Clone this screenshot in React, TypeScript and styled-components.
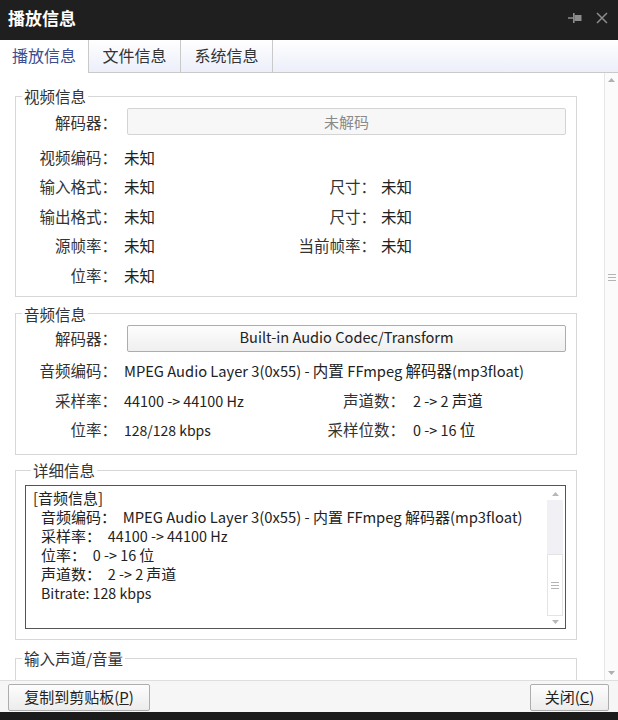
import React from 'react';
import styled, { createGlobalStyle } from 'styled-components';

const Global = createGlobalStyle`
  html, body { margin: 0; padding: 0; background: #fff; }
  body { font-family: "Noto Sans CJK SC", "Noto Sans", sans-serif; color: #222; }
  #root { width: 618px; height: 720px; }
`;

const Window = styled.div`
  width: 618px;
  height: 720px;
  display: flex;
  flex-direction: column;
  background: #fff;
  overflow: hidden;
`;

const TitleBar = styled.div`
  height: 40px;
  flex-shrink: 0;
  background: #1f1f1f;
  display: flex;
  align-items: center;
  padding: 0 10px 0 8px;
  box-sizing: border-box;
  gap: 14px;
`;

const Title = styled.div`
  flex: 1;
  color: #fff;
  font-size: 17px;
  font-weight: bold;
  line-height: 20px;
  margin-top: -4px;
`;

const TitleIcon = styled.svg`
  display: block;
  margin-top: -4px;
`;

const TabStrip = styled.div`
  height: 33px;
  flex-shrink: 0;
  display: flex;
  box-sizing: border-box;
  border-bottom: 1px solid #c9c9c9;
  background: linear-gradient(#ffffff, #eceefa);
`;

const Tab = styled.div<{ $w: number; $active?: boolean }>`
  width: ${p => p.$w}px;
  box-sizing: border-box;
  border-right: 1px solid #c9c9c9;
  display: flex;
  align-items: center;
  justify-content: center;
  font-size: 16px;
  color: ${p => (p.$active ? '#3d4c8e' : '#333')};
  background: ${p => (p.$active ? '#fff' : 'transparent')};
  margin-bottom: ${p => (p.$active ? '-1px' : '0')};
  padding-bottom: ${p => (p.$active ? '3px' : '2px')};
`;

const Main = styled.div`
  flex: 1;
  min-height: 0;
  display: flex;
`;

const ScrollBody = styled.div`
  flex: 1;
  overflow: hidden;
  padding-top: 13px;
  box-sizing: border-box;
`;

const VScroll = styled.div`
  width: 13px;
  flex-shrink: 0;
  border-left: 1px solid #e6e6e6;
  background: #fbfbfb;
  display: flex;
  flex-direction: column;
  align-items: center;
`;

const ArrowBtn = styled.div<{ $h: number }>`
  height: ${p => p.$h}px;
  width: 100%;
  display: flex;
  align-items: center;
  justify-content: center;
  flex-shrink: 0;
`;

const Thumb = styled.div<{ $h: number; $boxed?: boolean }>`
  height: ${p => p.$h}px;
  width: 100%;
  box-sizing: border-box;
  display: flex;
  align-items: center;
  justify-content: center;
  background: ${p => (p.$boxed ? '#fff' : 'transparent')};
  border: ${p => (p.$boxed ? '1px solid #e4e4e4' : 'none')};
  flex-shrink: 0;
`;

const Track = styled.div<{ $bg: string; $h?: number }>`
  ${p => (p.$h ? `height: ${p.$h}px; flex-shrink: 0;` : 'flex: 1;')}
  width: 100%;
  background: ${p => p.$bg};
`;

const Group = styled.fieldset<{ $mt: number; $pb: number; $pl?: number }>`
  margin: ${p => p.$mt}px 0 0 15px;
  width: 562px;
  box-sizing: border-box;
  border: 1px solid #d7d7d7;
  padding: 0 10px ${p => p.$pb}px ${p => p.$pl ?? 0}px;
  min-width: 0;
`;

const Legend = styled.legend`
  margin-left: 6px;
  padding: 0 2px;
  font-size: 15.5px;
  line-height: 20px;
  color: #333;
`;

const DecoderRow = styled.div<{ $mt: number }>`
  display: flex;
  align-items: center;
  margin-top: ${p => p.$mt}px;
  height: 27px;
  font-size: 15.5px;
`;

const DecoderBox = styled.div<{ $enabled?: boolean }>`
  flex: 1;
  height: 27px;
  margin-left: 10px;
  box-sizing: border-box;
  border: 1px solid ${p => (p.$enabled ? '#adadad' : '#d4d4d4')};
  border-radius: 2px;
  background: ${p => (p.$enabled ? 'linear-gradient(#fdfdfd, #efefef)' : '#f7f7f7')};
  color: ${p => (p.$enabled ? '#222' : '#8a8a8a')};
  font-size: 15px;
  display: flex;
  align-items: center;
  justify-content: center;
  padding-bottom: 1px;
`;

const Rows = styled.div<{ $mt: number }>`
  margin-top: ${p => p.$mt}px;
  display: flex;
  flex-direction: column;
`;

const Row = styled.div`
  display: flex;
  align-items: center;
  height: 29.5px;
  font-size: 15.5px;
  white-space: nowrap;
`;

const Label = styled.span<{ $w: number }>`
  width: ${p => p.$w}px;
  flex-shrink: 0;
  text-align: right;
  color: #333;
`;

const Value = styled.span<{ $w?: number; $pl: number }>`
  ${p => (p.$w ? `width: ${p.$w}px; flex-shrink: 0;` : '')}
  padding-left: ${p => p.$pl}px;
  box-sizing: border-box;
  color: #222;
`;

const Lt = styled.span<{ $fs?: number }>`
  font-size: ${p => p.$fs ?? 14.4}px;
  line-height: 1;
`;

const TextArea = styled.div`
  margin-top: 5px;
  height: 144px;
  box-sizing: border-box;
  border: 1px solid #555;
  display: flex;
  background: #fff;
`;

const TextContent = styled.div`
  flex: 1;
  padding: 2px 0 0 7px;
  font-size: 15px;
  color: #222;
  white-space: pre;
`;

const TextLine = styled.div<{ $indent?: boolean }>`
  height: 19px;
  line-height: 19px;
  padding-left: ${p => (p.$indent ? 8 : 0)}px;
`;

const InnerScroll = styled.div`
  width: 16px;
  margin: 1px 2px 1px 0;
  display: flex;
  flex-direction: column;
`;

const VolumeRow = styled.div`
  height: 60px;
  display: flex;
  justify-content: flex-end;
  align-items: flex-start;
  padding: 16px 100px 0 0;
`;

const SmallBox = styled.div`
  width: 20px;
  height: 20px;
  border: 1px solid #c8c8c8;
  background: #f5f5f5;
`;

const Footer = styled.div`
  height: 32px;
  flex-shrink: 0;
  box-sizing: border-box;
  border-top: 1px solid #dedede;
  background: #f6f6f6;
  display: flex;
  align-items: center;
  justify-content: space-between;
  padding: 1px 9px 0 8px;
`;

const Button = styled.button<{ $w: number }>`
  width: ${p => p.$w}px;
  height: 27px;
  box-sizing: border-box;
  border: 1px solid #adadad;
  border-radius: 2px;
  background: linear-gradient(#fdfdfd, #ececec);
  font-family: "Noto Sans CJK SC", sans-serif;
  font-size: 15px;
  color: #222;
  padding: 0 0 1px;
  display: flex;
  align-items: center;
  justify-content: center;
`;

const BottomEdge = styled.div`
  height: 8px;
  flex-shrink: 0;
  background: #1b1b1b;
`;

const Up = ({ c = '#a8a8a8' }: { c?: string }) => (
  <svg width="7" height="4" viewBox="0 0 7 4"><path d="M3.5 0L7 4H0z" fill={c} /></svg>
);
const Down = ({ c = '#a8a8a8' }: { c?: string }) => (
  <svg width="7" height="4" viewBox="0 0 7 4"><path d="M0 0h7L3.5 4z" fill={c} /></svg>
);
const Grip = () => (
  <svg width="8" height="7" viewBox="0 0 8 7">
    <path d="M0 0.5h8M0 3.5h8M0 6.5h8" stroke="#b4b4b4" strokeWidth="1" />
  </svg>
);

export default function App() {
  return (
    <Window>
      <Global />
      <TitleBar>
        <Title>播放信息</Title>
        <TitleIcon width="14" height="12" viewBox="0 0 14 12">
          <path d="M0 6h5" stroke="#8c8c8c" strokeWidth="1.5" />
          <rect x="5" y="1" width="1.6" height="10" fill="#8c8c8c" />
          <rect x="6.5" y="3" width="7" height="6" fill="#8c8c8c" />
        </TitleIcon>
        <TitleIcon width="12" height="12" viewBox="0 0 12 12">
          <path d="M1 1L11 11M11 1L1 11" stroke="#8c8c8c" strokeWidth="1.5" />
        </TitleIcon>
      </TitleBar>
      <TabStrip>
        <Tab $w={89} $active>播放信息</Tab>
        <Tab $w={92}>文件信息</Tab>
        <Tab $w={92}>系统信息</Tab>
      </TabStrip>
      <Main>
        <ScrollBody>
          <Group $mt={0} $pb={6}>
            <Legend>视频信息</Legend>
            <DecoderRow $mt={2}>
              <Label $w={101}>解码器：</Label>
              <DecoderBox>未解码</DecoderBox>
            </DecoderRow>
            <Rows $mt={7}>
              <Row><Label $w={101}>视频编码：</Label><Value $pl={7}>未知</Value></Row>
              <Row>
                <Label $w={101}>输入格式：</Label><Value $pl={7} $w={153}>未知</Value>
                <Label $w={106}>尺寸：</Label><Value $pl={5}>未知</Value>
              </Row>
              <Row>
                <Label $w={101}>输出格式：</Label><Value $pl={7} $w={153}>未知</Value>
                <Label $w={106}>尺寸：</Label><Value $pl={5}>未知</Value>
              </Row>
              <Row>
                <Label $w={101}>源帧率：</Label><Value $pl={7} $w={153}>未知</Value>
                <Label $w={106}>当前帧率：</Label><Value $pl={5}>未知</Value>
              </Row>
              <Row><Label $w={101}>位率：</Label><Value $pl={7}>未知</Value></Row>
            </Rows>
          </Group>

          <Group $mt={7} $pb={10}>
            <Legend>音频信息</Legend>
            <DecoderRow $mt={1}>
              <Label $w={101}>解码器：</Label>
              <DecoderBox $enabled><Lt $fs={14.6}>Built-in Audio Codec/Transform</Lt></DecoderBox>
            </DecoderRow>
            <Rows $mt={4}>
              <Row>
                <Label $w={101}>音频编码：</Label>
                <Value $pl={7}>
                  <Lt $fs={14.7}>MPEG Audio Layer 3(0x55) - </Lt>内置 <Lt $fs={14.7}>FFmpeg </Lt>解码器<Lt $fs={14.7}>(mp3float)</Lt>
                </Value>
              </Row>
              <Row>
                <Label $w={101}>采样率：</Label>
                <Value $pl={7} $w={183}><Lt>44100 -&gt; 44100 Hz</Lt></Value>
                <Label $w={105}>声道数：</Label>
                <Value $pl={8}><Lt>2 -&gt; 2 </Lt>声道</Value>
              </Row>
              <Row>
                <Label $w={101}>位率：</Label>
                <Value $pl={7} $w={183}><Lt $fs={14}>128/128 kbps</Lt></Value>
                <Label $w={105}>采样位数：</Label>
                <Value $pl={8}><Lt>0 -&gt; 16 </Lt>位</Value>
              </Row>
            </Rows>
          </Group>

          <Group $mt={5} $pb={10} $pl={9}>
            <Legend>详细信息</Legend>
            <TextArea>
              <TextContent>
                <TextLine>[音频信息]</TextLine>
                <TextLine $indent>音频编码：  <Lt $fs={14.8}>MPEG Audio Layer 3(0x55) - </Lt>内置 <Lt $fs={14.8}>FFmpeg </Lt>解码器<Lt $fs={14.8}>(mp3float)</Lt></TextLine>
                <TextLine $indent>采样率：  <Lt $fs={14.4}>44100 -&gt; 44100 Hz</Lt></TextLine>
                <TextLine $indent>位率：  <Lt $fs={14.4}>0 -&gt; 16 </Lt>位</TextLine>
                <TextLine $indent>声道数：  <Lt $fs={14.4}>2 -&gt; 2 </Lt>声道</TextLine>
                <TextLine $indent><Lt $fs={14.2}>Bitrate: 128 kbps</Lt></TextLine>
              </TextContent>
              <InnerScroll>
                <ArrowBtn $h={13}><Up c="#b8b8b8" /></ArrowBtn>
                <Track $bg="#f1f1f5" />
                <Thumb $h={62} $boxed><Grip /></Thumb>
                <ArrowBtn $h={11}><Down c="#b8b8b8" /></ArrowBtn>
              </InnerScroll>
            </TextArea>
          </Group>

          <Group $mt={8} $pb={0}>
            <Legend>输入声道/音量</Legend>
            <VolumeRow><SmallBox /></VolumeRow>
          </Group>
        </ScrollBody>
        <VScroll>
          <ArrowBtn $h={14}><Up c="#b0b0b0" /></ArrowBtn>
          <Track $bg="#fbfbfb" $h={183} />
          <Thumb $h={14}><Grip /></Thumb>
          <Track $bg="#fbfbfb" />
          <ArrowBtn $h={14}><Down c="#b0b0b0" /></ArrowBtn>
        </VScroll>
      </Main>
      <Footer>
        <Button $w={142}>复制到剪贴板(<u>P</u>)</Button>
        <Button $w={79}>关闭(<u>C</u>)</Button>
      </Footer>
      <BottomEdge />
    </Window>
  );
}
